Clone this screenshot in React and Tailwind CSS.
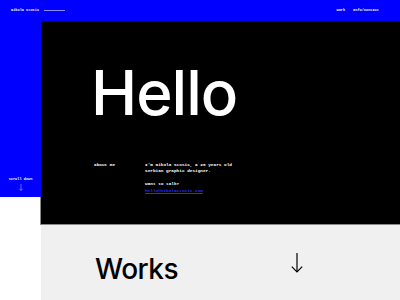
const mono = { fontFamily: '"Liberation Mono", "DejaVu Sans Mono", monospace' };

const ArrowDown = ({ className }) => (
  <svg viewBox="0 0 12 20" className={className} fill="none" stroke="currentColor" strokeWidth="1.2">
    <path d="M6 0 V19" />
    <path d="M0.8 13.6 L6 19 L11.2 13.6" />
  </svg>
);

const App = () => {
  return (
    <div className="w-[400px] h-[300px] overflow-hidden bg-white">
      {/* Top bar */}
      <header className="h-[21px] bg-[#0000ff] flex items-center pl-[11px] pr-[21px] text-white font-bold text-[3.6px]" style={mono}>
        <span>Nikola Stosic</span>
        <span className="ml-[5px] w-[21px] h-px bg-[#8c8cff]" />
        <nav className="ml-auto flex gap-[8px]">
          <span>Work</span>
          <span>Info/Contact</span>
        </nav>
      </header>

      <div className="flex">
        {/* Left rail */}
        <aside className="w-[41px] shrink-0">
          <div className="h-[176px] bg-[#0000ff] text-white flex flex-col items-center justify-end pb-[6px]">
            <span className="text-[3.6px] leading-none font-bold" style={mono}>scroll down</span>
            <ArrowDown className="w-[4px] h-[7px] mt-[2px]" />
          </div>
          <div className="h-[28px] border-r border-[#8a8a8a]" />
        </aside>

        <main className="flex-1">
          {/* Hero */}
          <section className="h-[204px] bg-black border-b border-[#8a8a8a] pl-[50px] text-white">
            <h1 className="pt-[41px] text-[62px] leading-none font-medium tracking-[-1px]" style={{ fontFamily: 'Inter, "Noto Sans", sans-serif' }}>
              Hello
            </h1>
            <div className="mt-[38px] flex text-[4.4px] leading-[6.4px] font-bold" style={mono}>
              <span className="w-[54px] shrink-0 pl-[3px]">about me</span>
              <div>
                <p>I'm Nikola Stosic, a 28 years old</p>
                <p>Serbian graphic designer.</p>
                <p className="mt-[6.4px]">Want to talk?</p>
                <p className="text-[#2a2aff] underline">hello@nikolastosic.com</p>
              </div>
            </div>
          </section>

          {/* Works */}
          <section className="h-[80px] bg-[#f0f0f0] pl-[54px] pt-[30px] flex items-start">
            <h2 className="w-[196px] text-[28px] leading-none font-medium text-black tracking-[-0.5px]" style={{ fontFamily: 'Inter, "Noto Sans", sans-serif' }}>
              Works
            </h2>
            <ArrowDown className="w-[12px] h-[20px] -mt-[2px] text-black" />
          </section>
        </main>
      </div>
    </div>
  );
};

export default App;
